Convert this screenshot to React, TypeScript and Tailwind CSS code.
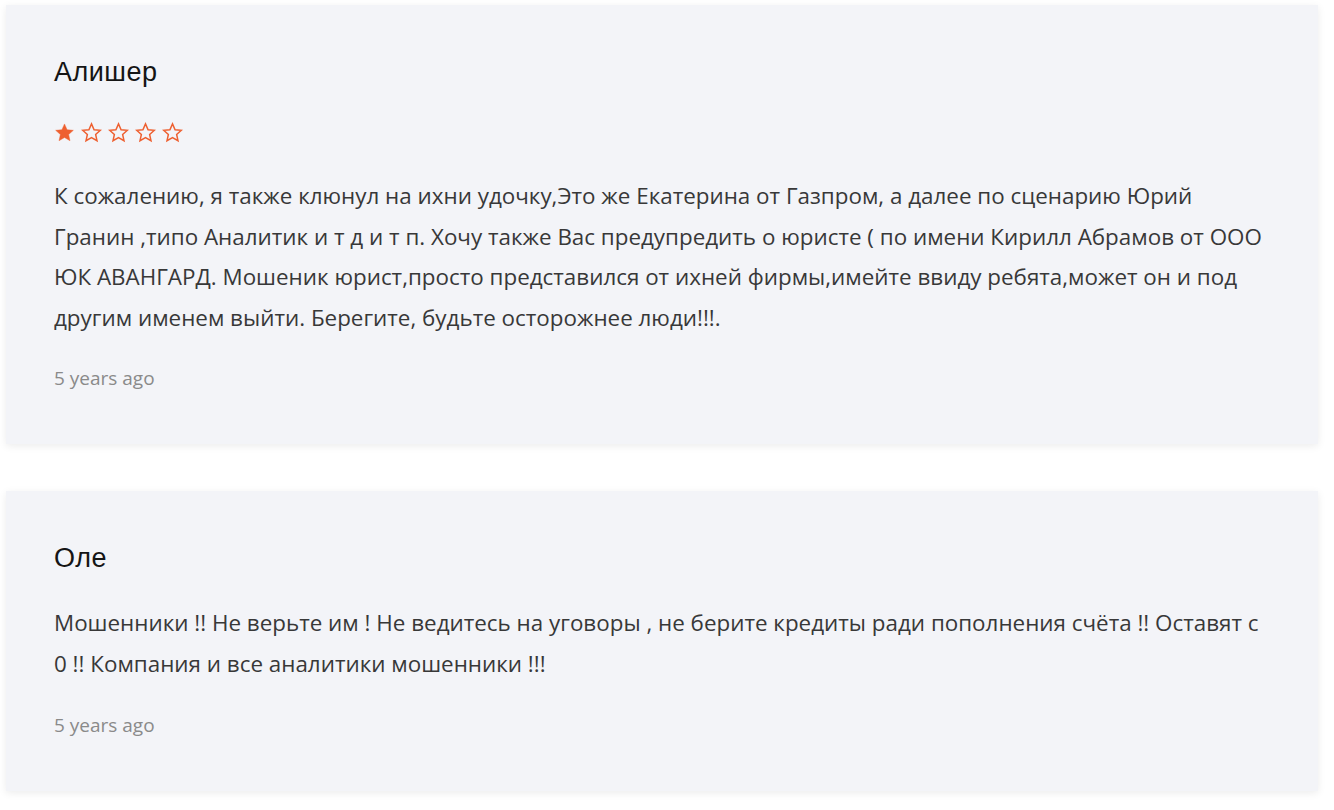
import React from "react";

const STAR = "M12 2.2l2.95 6.6 7.15.72-5.38 4.8 1.55 7.06L12 17.74l-6.27 3.64 1.55-7.06L1.9 9.52l7.15-.72z";

function Star({ filled }: { filled: boolean }) {
  return (
    <svg width="21" height="21" viewBox="0 0 24 24" className="shrink-0">
      <path
        d={STAR}
        fill={filled ? "#ee6031" : "none"}
        stroke="#ee6031"
        strokeWidth={filled ? 0.5 : 1.7}
        strokeLinejoin="miter"
      />
    </svg>
  );
}

function Card({
  name,
  stars,
  text,
}: {
  name: string;
  stars?: number;
  text: string;
}) {
  return (
    <div className="bg-[#f3f4f8] shadow-[0_2px_8px_rgba(0,0,0,0.08)] px-12 pt-12 pb-[52px]">
      <div className="text-[27px] leading-[38px] tracking-[0.5px] text-[#151515] font-['Liberation_Sans',Arial,sans-serif]">
        {name}
      </div>
      {stars !== undefined && (
        <div className="mt-[31px] h-[21px] flex gap-[6px]">
          {[0, 1, 2, 3, 4].map((i) => (
            <Star key={i} filled={i < stars} />
          ))}
        </div>
      )}
      <p
        className={`${stars !== undefined ? "mt-[33px]" : "mt-[26px]"} text-[22.4px] leading-[40.6px] text-[#383838] font-['Open_Sans','Noto_Sans',sans-serif]`}
      >
        {text}
      </p>
      <div className="mt-[26px] text-[19px] leading-[28px] text-[#8a8a8a] font-['Open_Sans','Noto_Sans',sans-serif]">
        5 years ago
      </div>
    </div>
  );
}

export default function App() {
  return (
    <div className="min-h-[810px] bg-white pl-[6px] pt-[5px]">
      <div className="w-[1312px] flex flex-col gap-[47px]">
        <Card
          name="Алишер"
          stars={1}
          text="К сожалению, я также клюнул на ихни удочку,Это же Екатерина от Газпром, а далее по сценарию Юрий Гранин ,типо Аналитик и т д и т п. Хочу также Вас предупредить о юристе ( по имени Кирилл Абрамов от ООО ЮК АВАНГАРД. Мошеник юрист,просто представился от ихней фирмы,имейте ввиду ребята,может он и под другим именем выйти. Берегите, будьте осторожнее люди!!!."
        />
        <Card
          name="Оле"
          text="Мошенники !! Не верьте им ! Не ведитесь на уговоры , не берите кредиты ради пополнения счёта !! Оставят с 0 !! Компания и все аналитики мошенники !!!"
        />
      </div>
    </div>
  );
}
